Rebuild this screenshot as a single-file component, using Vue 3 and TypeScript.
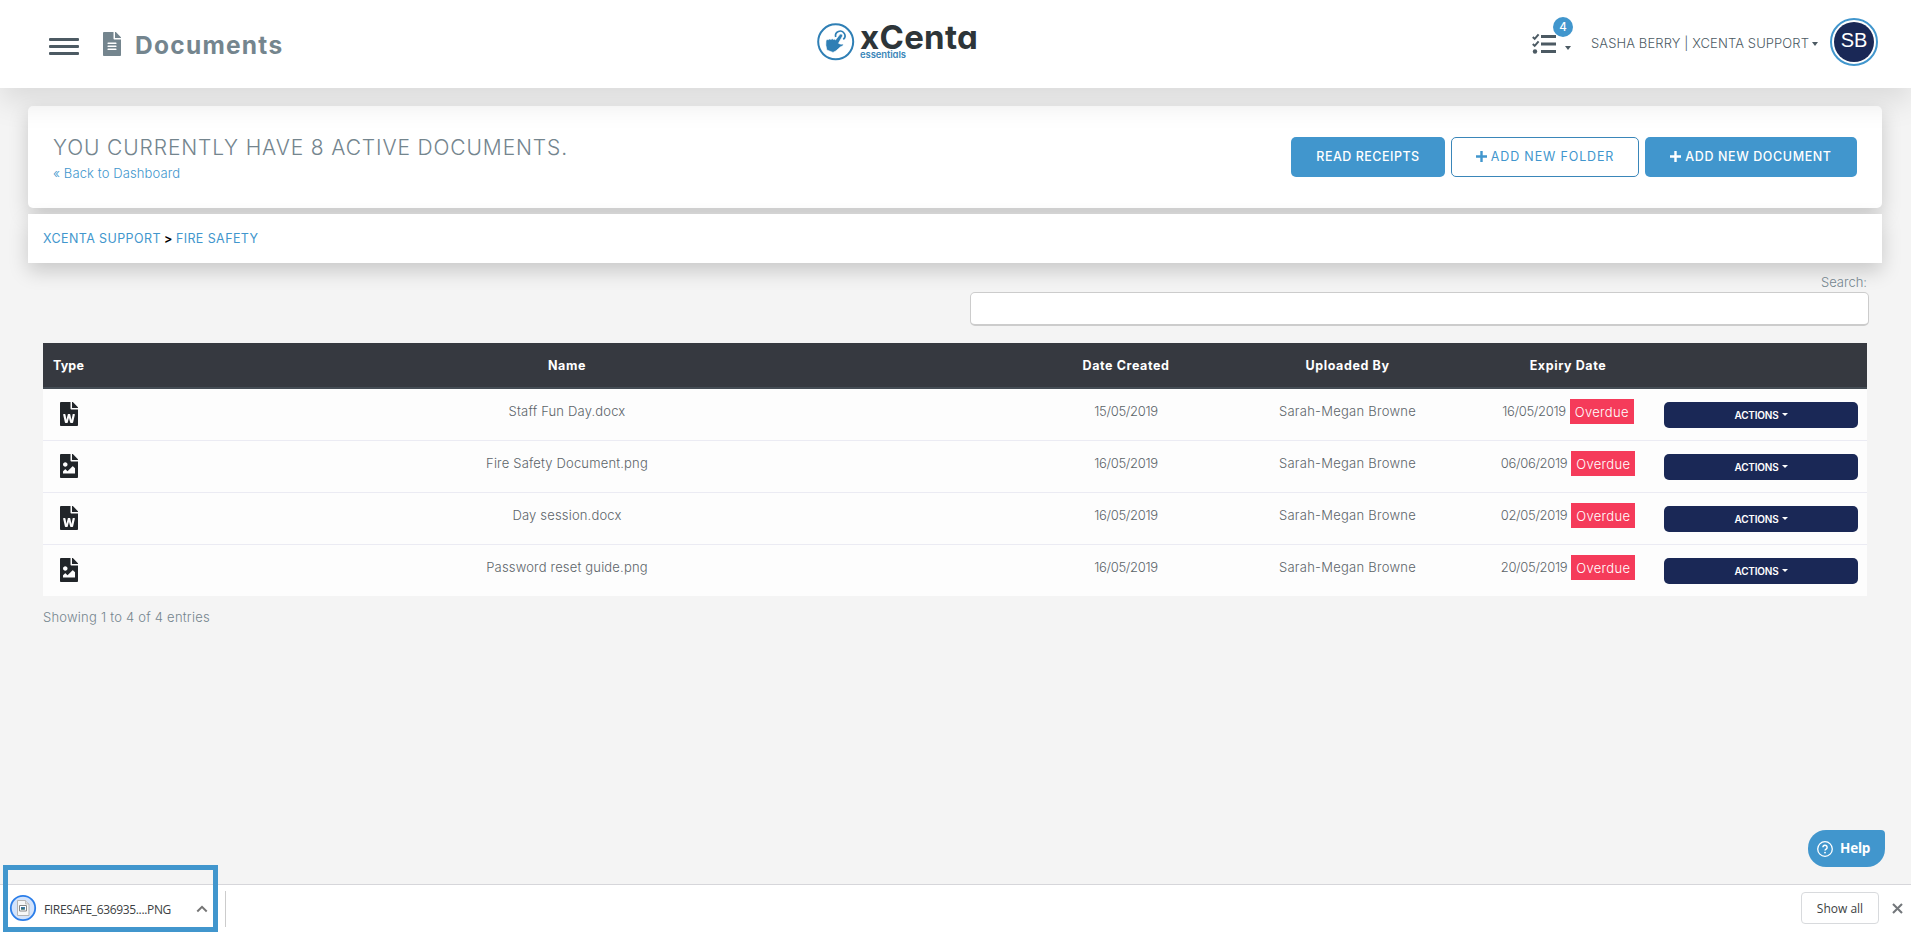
<script setup lang="ts">
interface Doc { kind: 'word' | 'image'; name: string; created: string; by: string; expiry: string }

const docs: Doc[] = [
  { kind: 'word', name: 'Staff Fun Day.docx', created: '15/05/2019', by: 'Sarah-Megan Browne', expiry: '16/05/2019' },
  { kind: 'image', name: 'Fire Safety Document.png', created: '16/05/2019', by: 'Sarah-Megan Browne', expiry: '06/06/2019' },
  { kind: 'word', name: 'Day session.docx', created: '16/05/2019', by: 'Sarah-Megan Browne', expiry: '02/05/2019' },
  { kind: 'image', name: 'Password reset guide.png', created: '16/05/2019', by: 'Sarah-Megan Browne', expiry: '20/05/2019' },
]
</script>

<template>
  <div class="page">
    <header class="topbar">
      <div class="left">
        <div class="burger"><i></i><i></i><i></i></div>
        <svg class="title-icon" viewBox="0 0 384 512"><path fill="#74858e" d="M224 136V0H24C10.700 0 0 10.700 0 24v464c0 13.300 10.700 24 24 24h336c13.300 0 24-10.700 24-24V160H248c-13.200 0-24-10.800-24-24zm64 236c0 6.600-5.400 12-12 12H108c-6.600 0-12-5.400-12-12v-8c0-6.600 5.400-12 12-12h168c6.600 0 12 5.400 12 12v8zm0-64c0 6.600-5.400 12-12 12H108c-6.600 0-12-5.400-12-12v-8c0-6.600 5.400-12 12-12h168c6.600 0 12 5.400 12 12v8zm0-72v8c0 6.600-5.400 12-12 12H108c-6.600 0-12-5.400-12-12v-8c0-6.600 5.400-12 12-12h168c6.600 0 12 5.400 12 12zm96-114v6H256V0h6c6.400 0 12.500 2.500 17 7l98 98c4.500 4.500 7 10.600 7 17z"/></svg>
        <h1 class="page-title">Documents</h1>
      </div>
      <div class="brand">
        <svg class="brand-mark" viewBox="0 0 38 38">
          <circle cx="18.700" cy="18.800" r="17.500" fill="none" stroke="#2f7fb5" stroke-width="2"/>
          <path d="M18.700 14a4.700 4.700 0 1 1 7.600 2.400" fill="none" stroke="#2f7fb5" stroke-width="1.700"/>
          <path fill="#2f7fb5" stroke="#fff" stroke-width=".6" d="M9 17.600q1-1.700 2.400-.9 1.200-1.400 2.600-.3 1.300-1.200 2.500.1 1.300-.9 2.100.4L22.700 11.600q1-1.200 2.200-.4 1.100.8.500 2.100L21.500 20.300q1.800 1.200 4.200.8 1.100.6.200 1.700-2.900.8-4.600 3-1.900 2.300-5.300 3.600L9.800 27q-1.500-4.800-.8-9.400z"/>
        </svg>
        <div class="brand-text"><span class="brand-name">xCenta</span><span class="brand-sub">essentials</span></div>
      </div>
      <div class="right">
        <div class="tasks">
          <svg class="tasks-icon" viewBox="0 0 24 22" fill="none" stroke="#4c5a63">
            <path d="M.8 4l1.900 1.900L6.600 1.400M.8 11l1.900 1.900 3.900-4.500" stroke-width="2"/>
            <circle cx="3" cy="18.500" r="2.200" fill="#4c5a63" stroke="none"/>
            <path d="M9 3.500H24M9 11H24M9 18.500H24" stroke-width="3"/>
          </svg>
          <b class="badge">4</b>
          <i class="caret"></i>
        </div>
        <span class="user-name">SASHA BERRY | XCENTA SUPPORT</span><i class="caret user-caret"></i>
        <div class="avatar"><span>SB</span></div>
      </div>
    </header>

    <main>
      <section class="card summary">
        <div>
          <h2>YOU CURRENTLY HAVE 8 ACTIVE DOCUMENTS.</h2>
          <a class="back">« Back to Dashboard</a>
        </div>
        <div class="buttons">
          <button class="btn receipts">READ RECEIPTS</button>
          <button class="btn outline"><svg class="plus" viewBox="0 0 11 11"><path d="M5.500 0v11M0 5.500h11" stroke="currentColor" stroke-width="2.400"/></svg><span>ADD NEW FOLDER</span></button>
          <button class="btn document"><svg class="plus" viewBox="0 0 11 11"><path d="M5.500 0v11M0 5.500h11" stroke="currentColor" stroke-width="2.400"/></svg><span>ADD NEW DOCUMENT</span></button>
        </div>
      </section>
      <nav class="card crumbs"><a>XCENTA SUPPORT</a><span>&gt;</span><a>FIRE SAFETY</a></nav>

      <label class="search"><span>Search:</span><input type="text"></label>

      <div class="table">
        <div class="row head">
          <div class="type">Type</div><div>Name</div><div>Date Created</div><div>Uploaded By</div><div>Expiry Date</div><div></div>
        </div>
        <div v-for="d in docs" :key="d.name" class="row item">
          <div class="type">
            <svg class="ficon" viewBox="0 0 384 512" fill="#212529">
              <path v-if="d.kind === 'word'" d="M224 136V0H24C10.700 0 0 10.700 0 24v464c0 13.300 10.700 24 24 24h336c13.300 0 24-10.700 24-24V160H248c-13.200 0-24-10.800-24-24zm57.100 120H305c7.700 0 13.400 7.100 11.700 14.700l-38 168c-1.200 5.500-6.100 9.300-11.700 9.300h-38c-5.500 0-10.300-3.800-11.600-9.100-25.800-103.500-20.800-81.200-25.600-110.500h-.5c-1.100 14.300-2.400 17.400-25.600 110.500-1.300 5.300-6.100 9.100-11.600 9.100H117c-5.600 0-10.500-3.900-11.700-9.400l-37.800-168c-1.700-7.500 4-14.600 11.700-14.600h24.500c5.700 0 10.700 4 11.800 9.700 15.600 78 20.100 109.500 21 122.200 1.600-10.200 7.300-32.700 29.400-122.700 1.300-5.400 6.100-9.100 11.700-9.100h29.100c5.600 0 10.400 3.800 11.700 9.200 24 100.400 28.800 124 29.600 129.400-.2-11.200-2.600-17.800 21.600-129.200 1-5.600 5.900-9.500 11.500-9.500zM384 121.900v6.100H256V0h6.100c6.400 0 12.500 2.500 17 7l97.900 98c4.500 4.500 7 10.600 7 16.900z"/>
              <path v-else d="M384 121.900V128H256V0h6.100c6.300 0 12.400 2.500 16.900 7l98 98c4.500 4.500 7 10.600 7 16.900zM248 160c-13.200 0-24-10.800-24-24V0H24C10.700 0 0 10.700 0 24v464c0 13.300 10.700 24 24 24h336c13.300 0 24-10.700 24-24V160H248zm-135.500 16c26.500 0 48 21.500 48 48s-21.500 48-48 48-48-21.500-48-48 21.500-48 48-48zm208 240h-256l.5-48.500L104.500 328c4.700-4.700 11.800-4.200 16.500.5l39.500 39.500L263.500 264.500c4.700-4.700 12.300-4.700 17 0l40 40V416z"/>
            </svg>
          </div>
          <div class="name">{{ d.name }}</div>
          <div class="date">{{ d.created }}</div>
          <div class="by">{{ d.by }}</div>
          <div class="expiry"><span class="date">{{ d.expiry }}</span><span class="overdue">Overdue</span></div>
          <div class="act"><button class="actions"><span>ACTIONS</span><i class="caret small"></i></button></div>
        </div>
      </div>
      <p class="info">Showing 1 to 4 of 4 entries</p>
    </main>

    <div class="help">
      <svg viewBox="0 0 16 16"><circle cx="8" cy="8" r="7.300" fill="none" stroke="#fff" stroke-width="1.300"/><path d="M5.900 6.300a2.100 2.100 0 1 1 3.200 1.800C8.300 8.600 8 8.800 8 9.600" fill="none" stroke="#fff" stroke-width="1.500"/><circle cx="8" cy="11.600" r=".95" fill="#fff"/></svg>
      <span>Help</span>
    </div>

    <footer class="shelf">
      <div class="download">
        <svg class="dl-icon" viewBox="0 0 28 28"><circle cx="14" cy="14" r="12.200" fill="#d3e3fb" stroke="#2a7de9" stroke-width="1.800"/><path d="M8.500 6.500h8l3.500 3.500v11.500H8.500z" fill="#f7f7f7" stroke="#b5b5b5"/><path d="M16.500 6.500V10H20" fill="#ddd" stroke="#b5b5b5" stroke-width=".8"/><path d="M10.500 11.500h7v5.500h-7z" fill="#fff" stroke="#888"/><path d="M12 13h4v2.500h-4z" fill="#3d79a8"/><path d="M12 15l1.500-1 2.500 1.500h-4z" fill="#3d6b52"/></svg>
        <span class="file">FIRESAFE_636935....PNG</span>
        <svg class="chev" viewBox="0 0 12 8"><path d="M1.300 6.500L6 1.900l4.700 4.600" fill="none" stroke="#757575" stroke-width="2"/></svg>
      </div>
      <div class="sep"></div>
      <button class="showall">Show all</button>
      <svg class="close" viewBox="0 0 11 11"><path d="M1 1l9 9M10 1l-9 9" stroke="#73777b" stroke-width="2.100"/></svg>
    </footer>
  </div>
</template>

<style>
body { margin: 0; background: #f4f4f4; }
</style>
<style scoped>
* { box-sizing: border-box; }
.page { position: relative; height: 933px; overflow: hidden; background: #f4f4f4; font-family: Inter, "Open Sans", sans-serif; font-size: 13px; color: #74858e; display: flex; flex-direction: column; white-space: nowrap; }
h1, h2, p { margin: 0; }
button { font: inherit; letter-spacing: inherit; border: 0; padding: 0; margin: 0; }
svg { display: block; flex: none; }
.topbar { position: relative; z-index: 2; flex: none; height: 88px; background: #fff; box-shadow: 0 14px 28px rgba(0,0,0,.1); display: grid; grid-template-columns: 817px 1fr 379px; }
.left { display: flex; }
.burger { width: 30px; margin: 38px 0 0 49px; display: flex; flex-direction: column; gap: 4px; }
.burger i { height: 3px; background: #4c5a63; border-radius: 1px; }
.title-icon { width: 18px; height: 24px; margin: 32px 14px 0 24px; }
.page-title { font-size: 24.500px; font-weight: 700; line-height: 30px; letter-spacing: 1.250px; margin-top: 30px; color: #74858e; }
.brand { display: flex; }
.brand-mark { width: 38px; height: 38px; margin: 23px 5px 0 0; }
.brand-text { display: flex; flex-direction: column; }
.brand-name { font-size: 33px; font-weight: 700; line-height: 34px; letter-spacing: .300px; color: #2d3539; margin-top: 20px; font-feature-settings: "cv11"; }
.brand-sub { font-size: 9.500px; font-weight: 600; line-height: 10px; letter-spacing: -.100px; color: #3a86b9; margin-top: -4px; font-feature-settings: "cv11"; }
.right { display: flex; }
.tasks { position: relative; width: 59px; flex: none; }
.tasks-icon { width: 24px; height: 22px; margin-top: 33px; }
.badge { position: absolute; left: 21px; top: 17px; width: 20px; height: 20px; border-radius: 50%; background: #4196cd; color: #fff; font-size: 11.500px; font-weight: 500; line-height: 20px; text-align: center; }
.caret { display: block; flex: none; border: 3.500px solid transparent; border-top: 4px solid #4c5a63; border-bottom: 0; width: 0; height: 0; }
.tasks .caret { position: absolute; left: 33px; top: 46px; }
.user-name { width: 218px; flex: none; font-weight: 300; line-height: 16px; letter-spacing: .110px; margin-top: 35px; color: #4c5a63; }
.user-caret { margin: 42px 12px 0 3px; }
.avatar { flex: none; width: 48px; height: 48px; margin-top: 18px; border-radius: 50%; border: 2px solid #4196cd; padding: 2px; }
.avatar span { display: block; border-radius: 50%; height: 40px; line-height: 37px; background: #1a2856; color: #fff; text-align: center; font-family: "Liberation Sans", sans-serif; font-size: 20px; }
main { padding: 18px 29px 0 28px; flex: 1; min-height: 0; }
.card { background: #fff; box-shadow: 0 8px 20px rgba(0,0,0,.18); }
.summary { height: 102px; border-radius: 5px; display: flex; justify-content: space-between; padding: 0 25px; }
h2 { font-size: 21px; font-weight: 300; line-height: 26px; letter-spacing: .870px; margin-top: 29px; color: #74858e; }
.back { display: block; margin-top: 2px; line-height: 20px; letter-spacing: .110px; color: #4196cd; font-weight: 350; }
.buttons { display: flex; gap: 6px; margin-top: 31px; }
.btn { height: 40px; border-radius: 5px; background: #4196cd; color: #fff; font-size: 12.500px; font-weight: 500; display: flex; align-items: center; justify-content: center; gap: 4px; padding-bottom: 1px; letter-spacing: .600px; }
.outline { width: 188px; background: #fff; border: 1px solid #3a86b9; color: #4196cd; font-weight: 400; letter-spacing: .850px; }
.receipts { width: 154px; letter-spacing: .500px; }
.document { width: 212px; }
.plus { width: 11px; height: 11px; }
.crumbs { height: 49px; margin-top: 6px; padding: 0 15px; display: flex; line-height: 49px; font-size: 12.500px; letter-spacing: .400px; }
.crumbs a { color: #4196cd; }
.crumbs span { width: 15px; padding-left: 3px; color: #000; font-weight: 600; }
.search { display: flex; flex-direction: column; align-items: flex-end; margin: 11px 13px 0 0; }
.search span { line-height: 16px; margin: 0 2px 2px 0; font-weight: 300; }
.search input { width: 899px; height: 34px; border: 1px solid #ccc; border-bottom: 2px solid #ccc; border-radius: 5px; background: #fff; }
.table { margin: 17px 15px 0; }
.row { display: grid; grid-template-columns: 53px 942px 176px 267px 174px 212px; height: 52px; border-top: 1px solid #ebebf3; background: #fdfdfd; text-align: center; color: #5c6469; font-weight: 300; line-height: 16px; }
.row > div { padding-top: 14px; }
.row.head { height: 46px; background: #363940; border: 0; border-bottom: 2px solid #454d55; color: #fff; font-size: 12.500px; font-weight: 700; letter-spacing: .600px; }
.head > div { padding-top: 15px; }
.head + .row { height: 51px; border-top: 0; }
.head .type { text-align: left; padding-left: 10px; letter-spacing: .140px; }
.item .type { padding: 13px 0 0 17px; }
.ficon { width: 18px; height: 24px; }
.name { letter-spacing: .170px; }
.date { letter-spacing: -.320px; }
.by { letter-spacing: .260px; }
.expiry { display: flex; justify-content: center; gap: 4px; }
.overdue { background: #f53b5a; color: #fff; width: 64px; height: 25px; line-height: 26px; margin-top: -4px; letter-spacing: .310px; }
.item .act { padding: 13px 9px 0; }
.actions { width: 100%; height: 26px; border-radius: 5px; background: #1a2856; color: #fff; font-size: 10px; font-weight: 600; letter-spacing: -.200px; display: flex; align-items: center; justify-content: center; gap: 3px; padding-bottom: 1px; }
.caret.small { border-width: 3px; border-top-color: #fff; border-bottom: 0; }
.info { margin: 11px 0 0 15px; line-height: 20px; font-weight: 300; letter-spacing: .230px; }
.help { position: absolute; left: 1808px; top: 830px; width: 77px; height: 37px; border-radius: 18px 4px 18px 18px; background: #4196cd; color: #fff; display: flex; align-items: center; padding: 0 0 1px 9px; gap: 7px; font: 700 13.500px "Open Sans", sans-serif; letter-spacing: -.200px; }
.help svg { width: 16px; height: 16px; margin-top: 1px; }
.shelf { flex: none; height: 49px; background: #fff; border-top: 1px solid #d6d6da; display: flex; font-family: "Open Sans", sans-serif; color: #3c3f43; font-size: 12px; }
.download { width: 215px; height: 67px; border: 5px solid #4196cd; margin: -20px 0 0 3px; display: flex; padding-top: 24px; }
.dl-icon { width: 28px; height: 28px; margin: 0 7px 0 1px; }
.file { width: 127px; line-height: 28px; margin-top: 2px; letter-spacing: -.350px; }
.chev { width: 12px; height: 8px; margin: 11px 0 0 25px; }
.sep { width: 1px; height: 36px; margin: 6px 0 0 7px; background: #ccc; }
.showall { margin: 7px 13px 0 auto; width: 78px; height: 32px; border: 1px solid #d8dadd; border-radius: 4px; background: #fff; color: #3c3f43; }
.close { width: 11px; height: 11px; margin: 18px 8px 0 0; }
</style>
